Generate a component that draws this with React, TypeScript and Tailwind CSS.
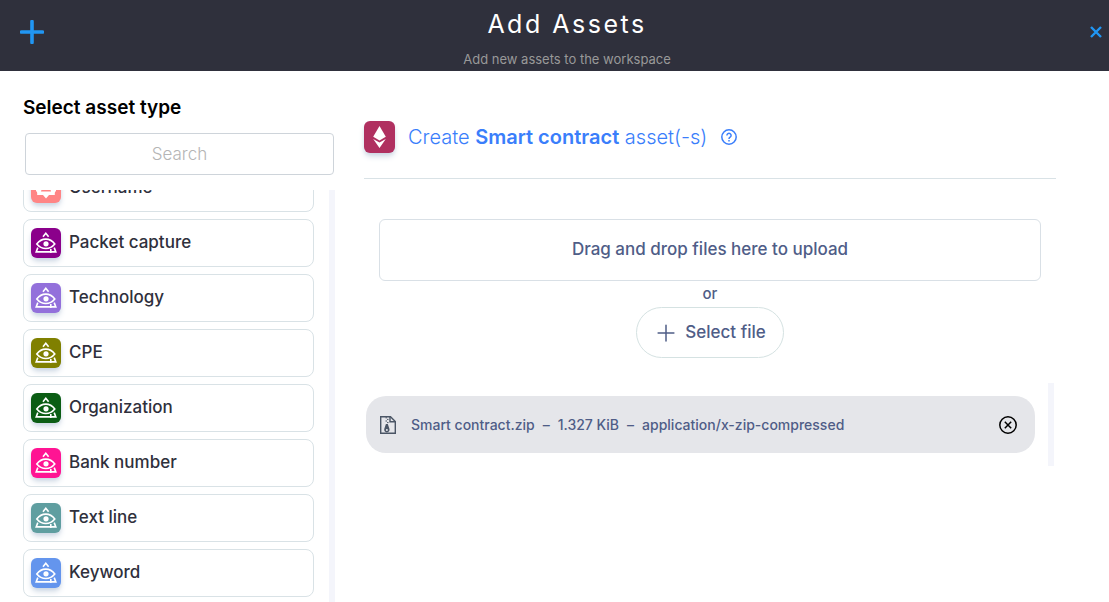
import React from "react";

interface AssetType {
  name: string;
  color: string;
  icon?: "user";
}

const assetTypes: AssetType[] = [
  { name: "Username", color: "bg-[#ff8585]", icon: "user" },
  { name: "Packet capture", color: "bg-[#8b008b]" },
  { name: "Technology", color: "bg-[#9370db]" },
  { name: "CPE", color: "bg-[#808000]" },
  { name: "Organization", color: "bg-[#0b5d14]" },
  { name: "Bank number", color: "bg-[#ff1493]" },
  { name: "Text line", color: "bg-[#5f9ea0]" },
  { name: "Keyword", color: "bg-[#6495ed]" },
];

const PlusIcon = ({ className, strokeWidth }: { className: string; strokeWidth: number }) => (
  <svg viewBox="0 0 24 24" className={className} fill="none" stroke="currentColor" strokeWidth={strokeWidth} strokeLinecap="round" aria-hidden="true">
    <path d="M12 1.5v21M1.5 12h21" />
  </svg>
);

const EyeIcon = () => (
  <svg viewBox="0 0 30 30" className="size-[30px]" fill="none" stroke="#fff" strokeWidth="1.6" aria-hidden="true">
    <path d="M12 8.800 14.800 5.200l2.800 3.600" />
    <path d="M5.800 16c2.400-3.300 5.500-4.900 9-4.900s6.600 1.600 9 4.900c-2.400 3-5.500 4.500-9 4.500S8.200 19 5.800 16Z" />
    <circle cx="15" cy="15.800" r="2.6" fill="#fff" stroke="none" />
    <path d="M6.800 19.600 5.200 23.900h14.600M19.800 21v4M19.800 23.900h5l-1.600-4.300" />
  </svg>
);

const UserBubbleIcon = () => (
  <svg viewBox="0 0 30 30" className="size-[30px]" aria-hidden="true">
    <path d="M8 4h14v4a3 3 0 0 0 3 3v7a3 3 0 0 0-1 3.500c-.3.500-.8.500-2 .5h-4L15 25.500 12 22H8c-1.200 0-1.700 0-2-.5A3 3 0 0 0 5 18v-7a3 3 0 0 0 3-3Z" fill="#fff" />
    <circle cx="15" cy="9.500" r="3" fill="#ff8585" />
    <path d="M10 18.500c.5-3 2.500-4 5-4s4.500 1 5 4Z" fill="#ff8585" />
  </svg>
);

const ZipIcon = () => (
  <svg viewBox="0 0 16 18" className="h-[18px] w-4 text-gray-600" fill="none" stroke="currentColor" strokeWidth="1.4" aria-hidden="true">
    <path d="M.7.7h9.800l4.800 4.800v11.800H.7Z" />
    <path d="M10 .7v5.100h5.300" />
    <path d="M5.500 1.800h1.500M7 3.400h1.500M5.500 5h1.500M7 6.600h1.500" strokeWidth="1" />
    <path d="M5.900 8h1.900l1.600 4.800a2.700 2.700 0 1 1-5.100 0Z" fill="currentColor" stroke="none" />
    <circle cx="6.900" cy="14" r="1" fill="#e5e7eb" stroke="none" />
  </svg>
);

const Header = () => (
  <header className="flex h-[71px] items-start justify-between bg-[#2f303c] pr-[7px] pl-5">
    <button type="button" aria-label="Add" className="flex h-16 items-center text-[#2196f3]">
      <PlusIcon className="size-6" strokeWidth={3.6} />
    </button>
    <div className="pt-1.5 text-center">
      <h1 className="text-[25px] leading-9 tracking-widest text-white">Add Assets</h1>
      <p className="pt-[7px] text-[13px] leading-5 text-[#999]">Add new assets to the workspace</p>
    </div>
    <button type="button" aria-label="Close" className="flex h-16 items-center text-[#2196f3]">
      <svg viewBox="0 0 12 12" className="size-3" stroke="currentColor" strokeWidth="2.4" aria-hidden="true">
        <path d="m1 1 10 10M11 1 1 11" />
      </svg>
    </button>
  </header>
);

const AssetList = () => (
  <aside className="flex w-[312px] shrink-0 flex-col pt-[25px]">
    <h2 className="text-[19px] leading-6 font-semibold text-black">Select asset type</h2>
    <input
      type="text"
      aria-label="Search"
      placeholder="Search"
      className="mt-[13px] mr-px ml-0.5 h-[42px] rounded border border-[#ced4da] text-center text-[17px] font-light placeholder:text-[#b5b5b5]"
    />
    <div className="mt-[15px] flex min-h-0 flex-1 justify-between overflow-hidden">
      <ul className="-mt-[26px] flex w-[291px] flex-col gap-[7px]">
        {assetTypes.map((type) => (
          <li key={type.name}>
            <button
              type="button"
              className="flex h-12 w-full items-center gap-2 rounded-lg border border-[#d9e2e6] px-[7px] text-left text-[17px] font-medium text-[#2f303c]"
            >
              <span className={`rounded-md shadow-md shadow-slate-300 ${type.color}`}>
                {type.icon === "user" ? <UserBubbleIcon /> : <EyeIcon />}
              </span>
              {type.name}
            </button>
          </li>
        ))}
      </ul>
      <div className="w-1.5 bg-[#f4f5fb]" />
    </div>
  </aside>
);

const UploadPanel = () => (
  <main className="ml-[29px] min-w-0 flex-1 pt-[50px]">
    <div className="flex items-center border-b border-[#d9e2e6] pb-[25px]">
      <span className="rounded-md bg-[#b03060] shadow-md shadow-slate-300">
        <svg viewBox="0 0 31 32" className="h-8 w-[31px]" fill="#fff" aria-hidden="true">
          <path d="m15.500 5 6.300 10.800-6.300 3.700-6.300-3.700Z" />
          <path d="m9.200 17.900 6.300 3.700 6.300-3.700-6.300 9.100Z" />
        </svg>
      </span>
      <h2 className="ml-[13px] text-[20px] leading-7 font-light text-[#3a7efb]">
        Create <b className="font-semibold">Smart contract</b> asset(-s)
      </h2>
      <button type="button" aria-label="Help" className="ml-3.5 text-[#3a7efb]">
        <svg viewBox="0 0 16 16" className="size-4" fill="none" stroke="currentColor" strokeWidth="1.5" aria-hidden="true">
          <circle cx="8" cy="8" r="7.200" />
          <path d="M5.900 6.400a2.100 2.100 0 1 1 3.200 1.800C8.300 8.700 8 9 8 9.900" />
          <path d="M8 11v1.600" />
        </svg>
      </button>
    </div>

    <div className="flex flex-col items-center px-[15px] pt-10 font-medium text-[#4f5d87]">
      <div className="flex h-[62px] w-full items-center justify-center rounded-md border border-[#d9e0e6] text-[17px]">
        Drag and drop files here to upload
      </div>
      <p className="py-[3px] text-[15px] leading-5">or</p>
      <button type="button" className="flex h-[51px] items-center gap-2.5 rounded-full border border-[#d5e2e2] pr-[17px] pl-5 text-[17px]">
        <PlusIcon className="size-[18px]" strokeWidth={2} />
        Select file
      </button>
    </div>

    <div className="mt-[25px] mr-0.5 flex justify-between">
      <ul className="ml-0.5 flex-1 py-[13px]">
        <li className="flex h-[57px] items-center rounded-[20px] bg-[#e5e6ea] pr-[18px] pl-3.5 text-[14px] font-medium text-[#4f5d87]">
          <ZipIcon />
          <div className="ml-[15px] flex flex-1 gap-2">
            <span>Smart contract.zip</span>
            <span>–</span>
            <span>1.327 KiB</span>
            <span>–</span>
            <span>application/x-zip-compressed</span>
          </div>
          <button type="button" aria-label="Remove file" className="text-black">
            <svg viewBox="0 0 18 18" className="size-[18px]" fill="none" stroke="currentColor" strokeWidth="1.5" aria-hidden="true">
              <circle cx="9" cy="9" r="8.200" />
              <path d="m5.800 5.800 6.400 6.400M12.200 5.800l-6.400 6.400" />
            </svg>
          </button>
        </li>
      </ul>
      <div className="ml-[13px] w-1.5 bg-[#f4f5fb]" />
    </div>
  </main>
);

export default function App() {
  return (
    <div className="flex h-screen flex-col overflow-hidden bg-white font-['Inter','Liberation_Sans',sans-serif]">
      <Header />
      <div className="flex min-h-0 flex-1 pr-[53px] pl-[23px]">
        <AssetList />
        <UploadPanel />
      </div>
    </div>
  );
}
